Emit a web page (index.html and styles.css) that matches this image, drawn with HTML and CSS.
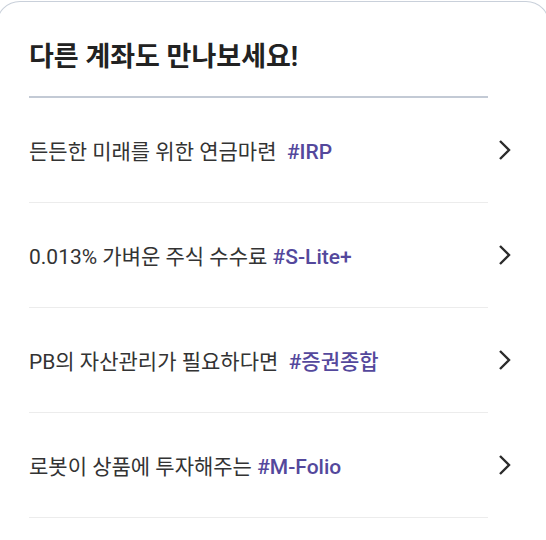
FILE: index.html
```html
<html lang="ko">
<head>
<meta charset="utf-8">
<link rel="stylesheet" href="styles.css">
</head>
<body>
<div class="sheet">
    <h2 class="sheet-title">다른 계좌도 만나보세요!</h2>
    <ul class="acct-list">
        <li class="acct-item">
            <span class="acct-text">든든한 미래를 위한 연금마련&nbsp; <b class="tag">#IRP</b></span>
            <svg class="chev" width="14" height="22" viewBox="0 0 14 22"><path d="M2 2 L11 11 L2 20" fill="none" stroke="#2b2b2b" stroke-width="2.4"/></svg>
        </li>
        <li class="acct-item">
            <span class="acct-text">0.013% 가벼운 주식 수수료 <b class="tag">#S-Lite+</b></span>
            <svg class="chev" width="14" height="22" viewBox="0 0 14 22"><path d="M2 2 L11 11 L2 20" fill="none" stroke="#2b2b2b" stroke-width="2.4"/></svg>
        </li>
        <li class="acct-item">
            <span class="acct-text">PB의 자산관리가 필요하다면&nbsp; <b class="tag">#증권종합</b></span>
            <svg class="chev" width="14" height="22" viewBox="0 0 14 22"><path d="M2 2 L11 11 L2 20" fill="none" stroke="#2b2b2b" stroke-width="2.4"/></svg>
        </li>
        <li class="acct-item">
            <span class="acct-text">로봇이 상품에 투자해주는 <b class="tag">#M-Folio</b></span>
            <svg class="chev" width="14" height="22" viewBox="0 0 14 22"><path d="M2 2 L11 11 L2 20" fill="none" stroke="#2b2b2b" stroke-width="2.4"/></svg>
        </li>
    </ul>
</div>
</body>
</html>
```

FILE: styles.css
```css
body {
    margin: 0;
    padding: 0;
    background-color: #fff;
    font-family: Roboto, "Noto Sans CJK KR", sans-serif;
    overflow: hidden;
}
.sheet {
    margin: 1px -4px 0 -4px;
    padding: 0 0 0 32px;
    height: 560px;
    background-color: #fff;
    border: 1px solid #c9d0da;
    border-bottom: none;
    border-radius: 24px 24px 0 0;
}
.sheet-title {
    margin: 0;
    padding: 37px 0 21px 0;
    width: 459px;
    font-size: 27px;
    font-weight: bold;
    color: #222;
    line-height: 36px;
    border-bottom: 2px solid #c3cad5;
}
.acct-list {
    list-style: none;
    margin: 0;
    padding: 0;
    width: 459px;
}
.acct-item {
    display: flex;
    align-items: center;
    justify-content: space-between;
    height: 104px;
    border-bottom: 1px solid #ececec;
}
.acct-text {
    font-size: 21px;
    color: #333;
}
.tag {
    color: #54489c;
    font-weight: 500;
}
.chev {
    margin-right: -24px;
}
```
